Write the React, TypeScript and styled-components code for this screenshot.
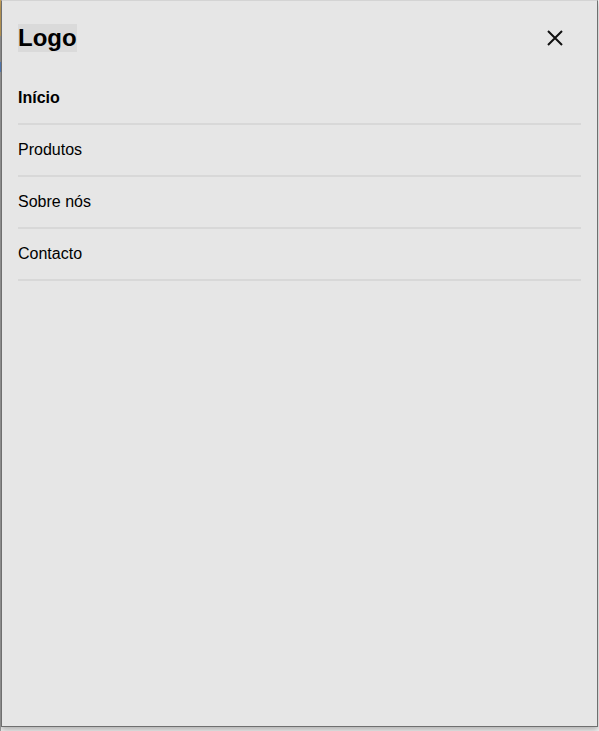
import styled, { createGlobalStyle } from "styled-components";

const GlobalStyle = createGlobalStyle`
  html, body {
    margin: 0;
    padding: 0;
    background: #f4f4f4;
    font-family: "Liberation Sans", Arial, sans-serif;
  }
  * {
    box-sizing: border-box;
  }
`;

// fundo da página por trás do menu
const Backdrop = styled.div`
  display: flex;
  padding-left: 1px;
  height: 731px;
  background: linear-gradient(
      to bottom,
      #c9a35a 0 36px,
      #9a9a9a 36px 62px,
      #5b86c4 62px 72px,
      #a0a0a0 72px 100%
    )
    left top / 1px 100% no-repeat;
`;

const Panel = styled.aside`
  width: 597px;
  height: 727px;
  background: #e6e6e6;
  border: 1px solid #6f6f6f;
  border-top-color: #d4d4d4;
  box-shadow: 0 3px 6px rgba(0, 0, 0, 0.28);
  padding: 17px 16px;
  display: flex;
  flex-direction: column;
`;

const Header = styled.header`
  display: flex;
  align-items: center;
  justify-content: space-between;
  height: 40px;
  margin-bottom: 15px;
`;

const Logo = styled.div`
  font-size: 24px;
  font-weight: bold;
  line-height: 28px;
  color: #000;
  background: #dadada;
`;

const CloseButton = styled.button`
  width: 24px;
  height: 24px;
  margin-right: 14px;
  padding: 0;
  border: none;
  background: transparent;
  display: flex;
  align-items: center;
  justify-content: center;
  cursor: pointer;
  color: #111;
`;

const NavList = styled.nav`
  display: flex;
  flex-direction: column;
`;

const NavItem = styled.a<{ $active?: boolean }>`
  display: block;
  padding: 16px 0;
  font-size: 16px;
  line-height: 18px;
  color: #000;
  text-decoration: none;
  font-weight: ${(p) => (p.$active ? "bold" : "normal")};
  border-bottom: 2px solid #d8d8d8;
`;

const items = ["Início", "Produtos", "Sobre nós", "Contacto"];

const App = () => {
  return (
    <>
      <GlobalStyle />
      <Backdrop>
        <Panel>
          <Header>
            <Logo>Logo</Logo>
            <CloseButton aria-label="Fechar">
              <svg width="16" height="16" viewBox="0 0 16 16" fill="none">
                <path
                  d="M1 1L15 15M15 1L1 15"
                  stroke="currentColor"
                  strokeWidth="2"
                />
              </svg>
            </CloseButton>
          </Header>
          <NavList>
            {items.map((label, i) => (
              <NavItem key={label} href="#" $active={i === 0}>
                {label}
              </NavItem>
            ))}
          </NavList>
        </Panel>
      </Backdrop>
    </>
  );
};

export default App;
